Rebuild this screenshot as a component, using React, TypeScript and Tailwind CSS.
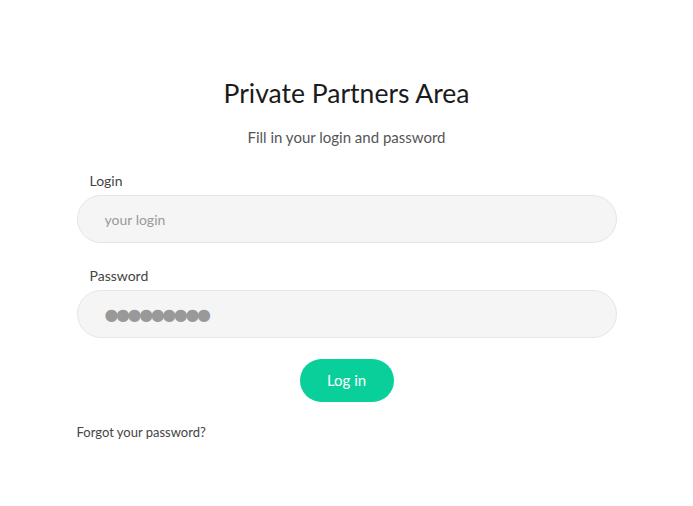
import React from 'react';

export default function App() {
  return (
    <div className="min-h-screen bg-white font-['Lato','Liberation_Sans',sans-serif]">
      <div className="mx-auto w-[540px] pt-[76px]">
        <h1 className="text-center text-[26.5px] leading-[34px] text-[#1b1b1b]">Private Partners Area</h1>
        <p className="mt-[17px] text-center text-[15px] leading-[20px] text-[#555]">Fill in your login and password</p>

        <form className="mt-[25px]" onSubmit={(e) => e.preventDefault()}>
          <label className="block pl-[13px] text-[14px] leading-[18px] text-[#444]">Login</label>
          <input
            type="text"
            placeholder="your login"
            className="mt-[5px] h-[48px] w-full rounded-full border border-[#e6e6e6] bg-[#f5f5f5] px-[27px] text-[14px] text-[#333] outline-none placeholder:text-[#999]"
          />

          <label className="mt-[24px] block pl-[13px] text-[14px] leading-[18px] text-[#444]">Password</label>
          {/* masked value drawn as discs so the dots match the big grey ones */}
          <input
            type="text"
            readOnly
            value="●●●●●●●●●"
            className="mt-[5px] h-[48px] w-full rounded-full border border-[#e6e6e6] bg-[#f5f5f5] px-[27px] font-['DejaVu_Sans',sans-serif] text-[16px] tracking-[-2.4px] text-[#999] outline-none"
          />

          <div className="mt-[21px] flex justify-center">
            <button
              type="submit"
              className="h-[43px] w-[94px] rounded-full bg-[#09cf9a] text-[15px] text-white"
            >
              Log in
            </button>
          </div>
        </form>

        <a href="#" className="mt-[22px] block text-[13px] leading-[17px] text-[#444]">Forgot your password?</a>
      </div>
    </div>
  );
}
